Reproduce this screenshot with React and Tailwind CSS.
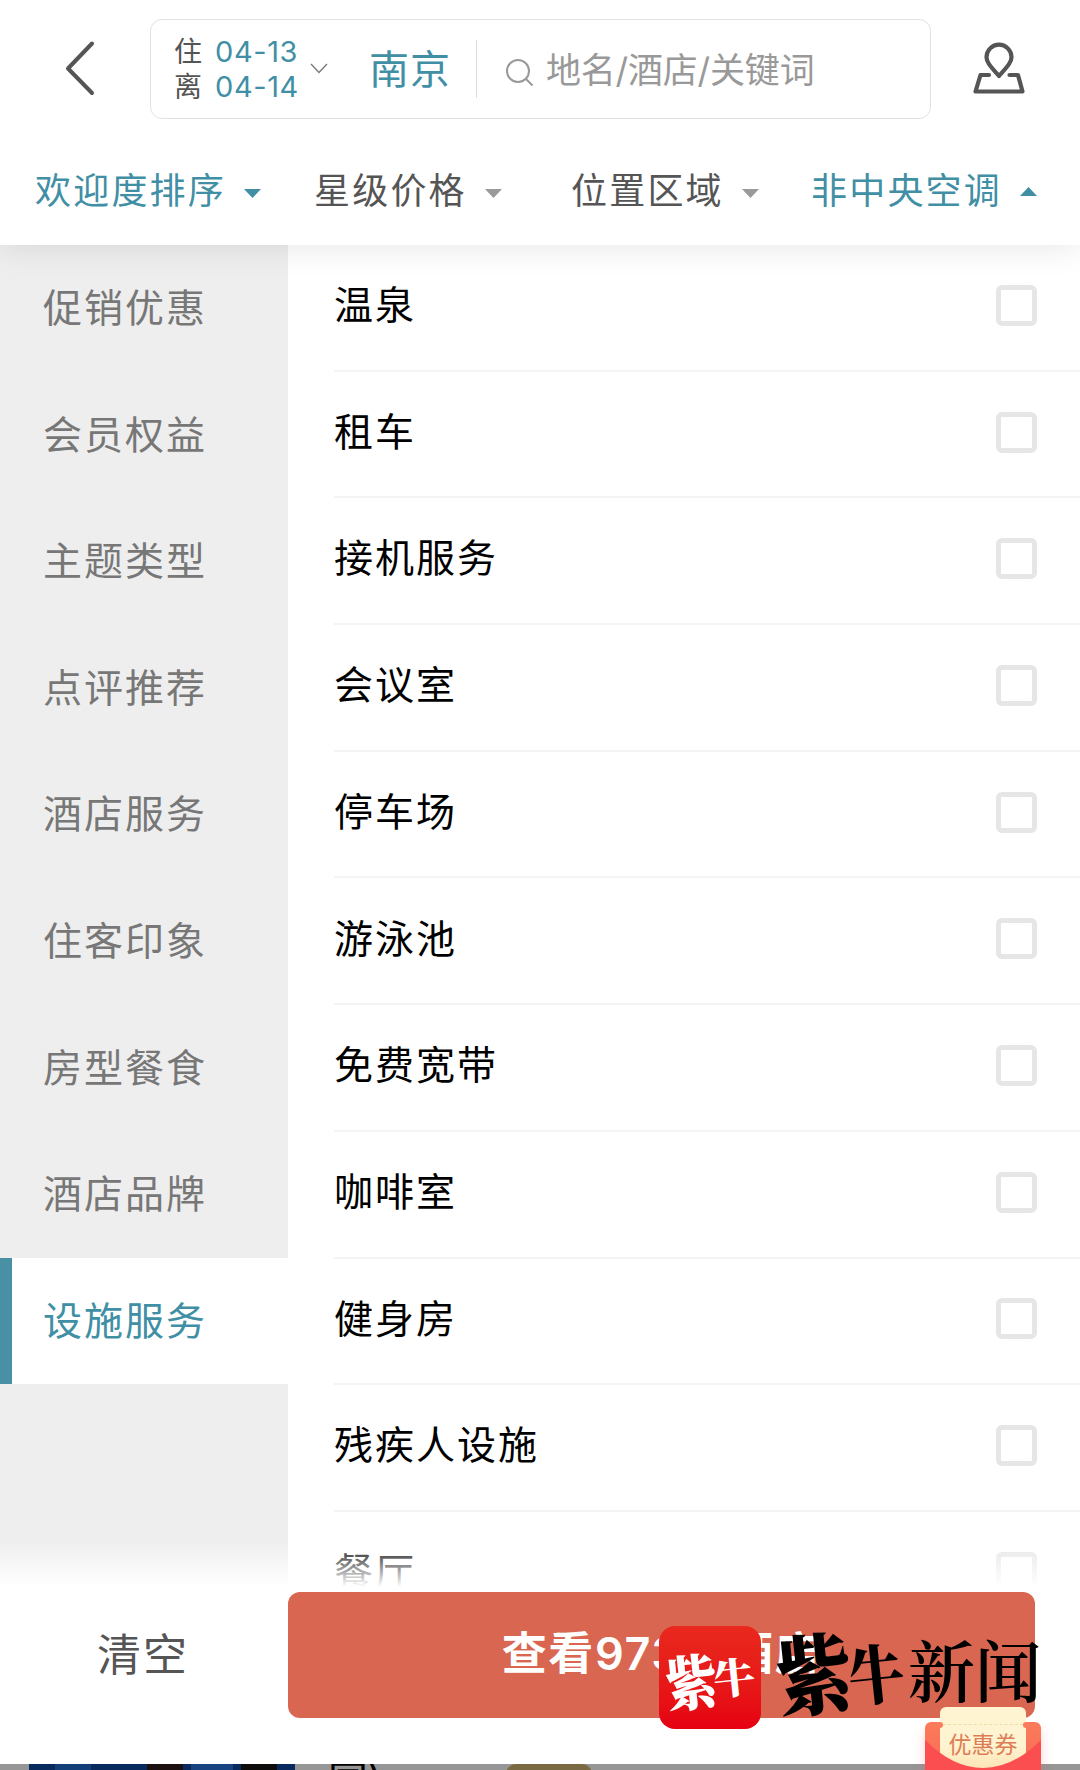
import React, { useState } from 'react';
import { clsx } from 'clsx';

const tabs = [
  { name: '欢迎度排序', active: true, className: 'w-[279px]' },
  { name: '星级价格', active: false, className: 'w-[257px]' },
  { name: '位置区域', active: false, className: 'w-[240px]' },
  { name: '非中央空调', active: true, open: true, className: 'w-[240px]' },
];

const categories = [
  '促销优惠',
  '会员权益',
  '主题类型',
  '点评推荐',
  '酒店服务',
  '住客印象',
  '房型餐食',
  '酒店品牌',
  '设施服务',
];

const facilities = [
  '温泉',
  '租车',
  '接机服务',
  '会议室',
  '停车场',
  '游泳池',
  '免费宽带',
  '咖啡室',
  '健身房',
  '残疾人设施',
  '餐厅',
];

function SearchHeader() {
  return (
    <header className="relative z-20 flex h-[137px] shrink-0 bg-white pt-[19px]">
      <button className="flex h-[100px] w-[150px] shrink-0 pl-[64px] pt-[21px]">
        <svg width="32" height="56" viewBox="0 0 32 56" fill="none" stroke="#555" strokeWidth="4">
          <path d="M28 3.5 4 28.5 28 53" strokeLinecap="round" strokeLinejoin="round" />
        </svg>
      </button>

      <div className="flex h-[100px] w-[781px] shrink-0 rounded-xl border border-[#e2e2e2] pl-[23px]">
        <div className="flex h-full flex-col pt-[15px] text-[28px] leading-[34.5px] text-[#555]">
          <div className="flex w-[125px] whitespace-nowrap">
            <span className="w-[41px] shrink-0">住</span>
            <span className="text-[29px] tracking-[0.6px] text-[#418fa5]">04-13</span>
          </div>
          <div className="flex w-[125px] whitespace-nowrap">
            <span className="w-[41px] shrink-0">离</span>
            <span className="text-[29px] tracking-[0.6px] text-[#418fa5]">04-14</span>
          </div>
        </div>
        <svg className="ml-[11px] mt-[43px] shrink-0" width="18" height="11" viewBox="0 0 18 11" fill="none" stroke="#777" strokeWidth="1.3">
          <path d="M1 1 9 9.5 17 1" />
        </svg>
        <span className="ml-[41px] mt-[19px] text-[40px] leading-[62px] tracking-[1px] text-[#418fa5]">南京</span>
        <div className="ml-[25px] mt-[20px] h-[58px] w-px bg-[#ddd]" />
        <svg className="ml-[28px] mt-[38px] shrink-0" width="30" height="30" viewBox="0 0 30 30" fill="none" stroke="#999" strokeWidth="2">
          <circle cx="13" cy="13" r="11" />
          <path d="m21 21 6.5 6.5" />
        </svg>
        <span className="ml-[11px] mt-[19px] text-[35px] leading-[62px] tracking-[-0.2px] text-[#999]">地名/酒店/关键词</span>
      </div>

      <button className="ml-[40px] h-[60px] pt-[21px]">
        <svg width="56" height="56" viewBox="0 0 56 56" fill="none" stroke="#555" strokeWidth="4.2" strokeLinejoin="round" strokeLinecap="round">
          <path d="M28 36C20 27 15.5 22.500 15.500 17.200a12.500 12.500 0 0 1 25 0C40.500 22.500 36 27 28 36Z" />
          <path d="M18 35H9.500L4.500 51.500h47L47 35h-8.500" />
        </svg>
      </button>
    </header>
  );
}

function Tab({ name, active, open, className }) {
  return (
    <button className={clsx('flex items-center text-left text-[36px] tracking-[2.2px]', className, active ? 'text-[#418fa5]' : 'text-[#555]')}>
      <span className="whitespace-nowrap leading-[54px]">{name}</span>
      <svg className={clsx('ml-[18px] shrink-0', open ? 'rotate-180' : 'mt-[5px]')} width="17" height="9" viewBox="0 0 17 9">
        <path d="M0 0h17L8.500 9z" fill={active ? '#418fa5' : '#9a9a9a'} />
      </svg>
    </button>
  );
}

function Watermark() {
  return (
    <div className="absolute left-[659px] top-[1626px] flex font-['Noto_Serif_CJK_SC','Noto_Sans_CJK_SC',serif]">
      <div className="flex h-[103px] w-[102px] items-center justify-center rounded-[16px] bg-gradient-to-b from-[#e9281e] to-[#e60012]">
        <div className="flex -rotate-6 items-center font-black text-white">
          <span className="scale-y-115 text-[52px] leading-[70px]">紫</span>
          <span className="-ml-[4px] text-[42px] leading-[70px]">牛</span>
        </div>
      </div>
      <div className="ml-[15px] flex h-[90px] items-center text-black">
        <span className="-rotate-6 scale-y-115 text-[76px] font-black leading-[90px]">紫</span>
        <span className="-ml-[4px] -rotate-6 scale-y-115 text-[56px] font-black leading-[90px]">牛</span>
        <span className="-mt-[6px] ml-[4px] text-[67px] font-semibold leading-[90px]">新闻</span>
      </div>
    </div>
  );
}

function CouponBadge() {
  return (
    <div className="absolute left-[925px] top-[1707px] h-[63px] w-[116px]">
      <div className="absolute inset-x-0 bottom-0 top-[15px] rounded-t-[6px] bg-gradient-to-b from-[#fb7b5b] to-[#f96a54] shadow-[0_8px_12px_rgba(251,78,80,0.25)]" />
      <div className="absolute left-[15px] top-0 flex h-[63px] w-[86px] justify-center rounded-t-[6px] bg-gradient-to-b from-[#fff4d2] from-60% to-[#fde3b4] pt-[22px]">
        <span className="text-[23px] leading-[32px] text-[#dc7d55]">优惠券</span>
      </div>
      <div className="absolute left-[18px] right-[18px] top-[17px] border-t border-dashed border-[#ecdcae]" />
      {/* ticket notches */}
      <div className="absolute left-[13px] top-[15px] h-[6px] w-[5px] rounded-r-[3px] bg-[#fb7b5b]" />
      <div className="absolute right-[13px] top-[15px] h-[6px] w-[5px] rounded-l-[3px] bg-[#fb7b5b]" />
      <svg className="absolute bottom-0 left-0" width="116" height="30" viewBox="0 0 116 30">
        <path d="M0 0Q28 28 58 28T116 0V30H0Z" fill="#fb4e50" />
      </svg>
    </div>
  );
}

export default function App() {
  const [selected, setSelected] = useState('设施服务');

  return (
    <div className="relative flex h-[1770px] w-[1080px] flex-col overflow-hidden bg-white font-['Inter','Noto_Sans_CJK_SC',sans-serif]">
      <SearchHeader />

      <nav className="relative z-10 flex h-[108px] shrink-0 bg-white pl-[35px] shadow-[0_4px_30px_rgba(0,0,0,0.09)]">
        {tabs.map((tab) => (
          <Tab key={tab.name} {...tab} />
        ))}
      </nav>

      <main className="relative flex h-[1347px] shrink-0 overflow-hidden">
        <aside className="w-[288px] shrink-0 bg-[#eee]">
          {categories.map((name) => (
            <button
              key={name}
              onClick={() => setSelected(name)}
              className={clsx(
                'flex h-[126.6px] w-full items-center border-l-[12px] pl-[31px] text-[39px] tracking-[2px]',
                name === selected ? 'border-[#4a90a4] bg-white text-[#418fa5]' : 'border-transparent text-[#777]'
              )}
            >
              {name}
            </button>
          ))}
        </aside>

        <section className="flex-1 pl-[46px]">
          {facilities.map((name) => (
            <label key={name} className="flex h-[126.7px] items-center justify-between border-b-2 border-[#f4f4f4] pb-[4px] pr-[43px] text-[39px] tracking-[2px] text-black">
              <span>{name}</span>
              <span className="size-[41px] rounded-[6px] border-[5px] border-[#e6e6e6]" />
            </label>
          ))}
        </section>

        {/* content fades out above the action bar */}
        <div className="absolute inset-x-0 bottom-0 h-[52px] bg-gradient-to-b from-white/0 to-white to-90%" />
      </main>

      <footer className="flex h-[172px] shrink-0 bg-white">
        <button className="h-[126px] w-[288px] pr-[2px] text-[44px] tracking-[2px] text-[#555]">清空</button>
        <button className="h-[126px] w-[747px] rounded-xl bg-[#d96651] pb-[3px] text-[45px] font-semibold tracking-[1.6px] text-white">
          查看973家酒店
        </button>
      </footer>

      {/* hotel list showing under the sheet */}
      <div className="flex h-[6px] shrink-0 overflow-hidden bg-[#969696]">
        <div className="ml-[29px] flex h-full w-[266px] bg-[#082a5c]">
          <div className="ml-[26px] w-[36px] bg-[#123f78]" />
          <div className="ml-[56px] w-[36px] bg-[#1c1010]" />
          <div className="ml-[8px] w-[42px] bg-[#174480]" />
          <div className="ml-[8px] w-[36px] bg-[#0f0d0b]" />
        </div>
        <span className="ml-[33px] -mt-[3px] w-[178px] text-[40px] leading-[40px] text-black">国)</span>
        <div className="h-[30px] w-[86px] rounded-t-[10px] bg-[#796a43]" />
      </div>

      <Watermark />
      <CouponBadge />
    </div>
  );
}
